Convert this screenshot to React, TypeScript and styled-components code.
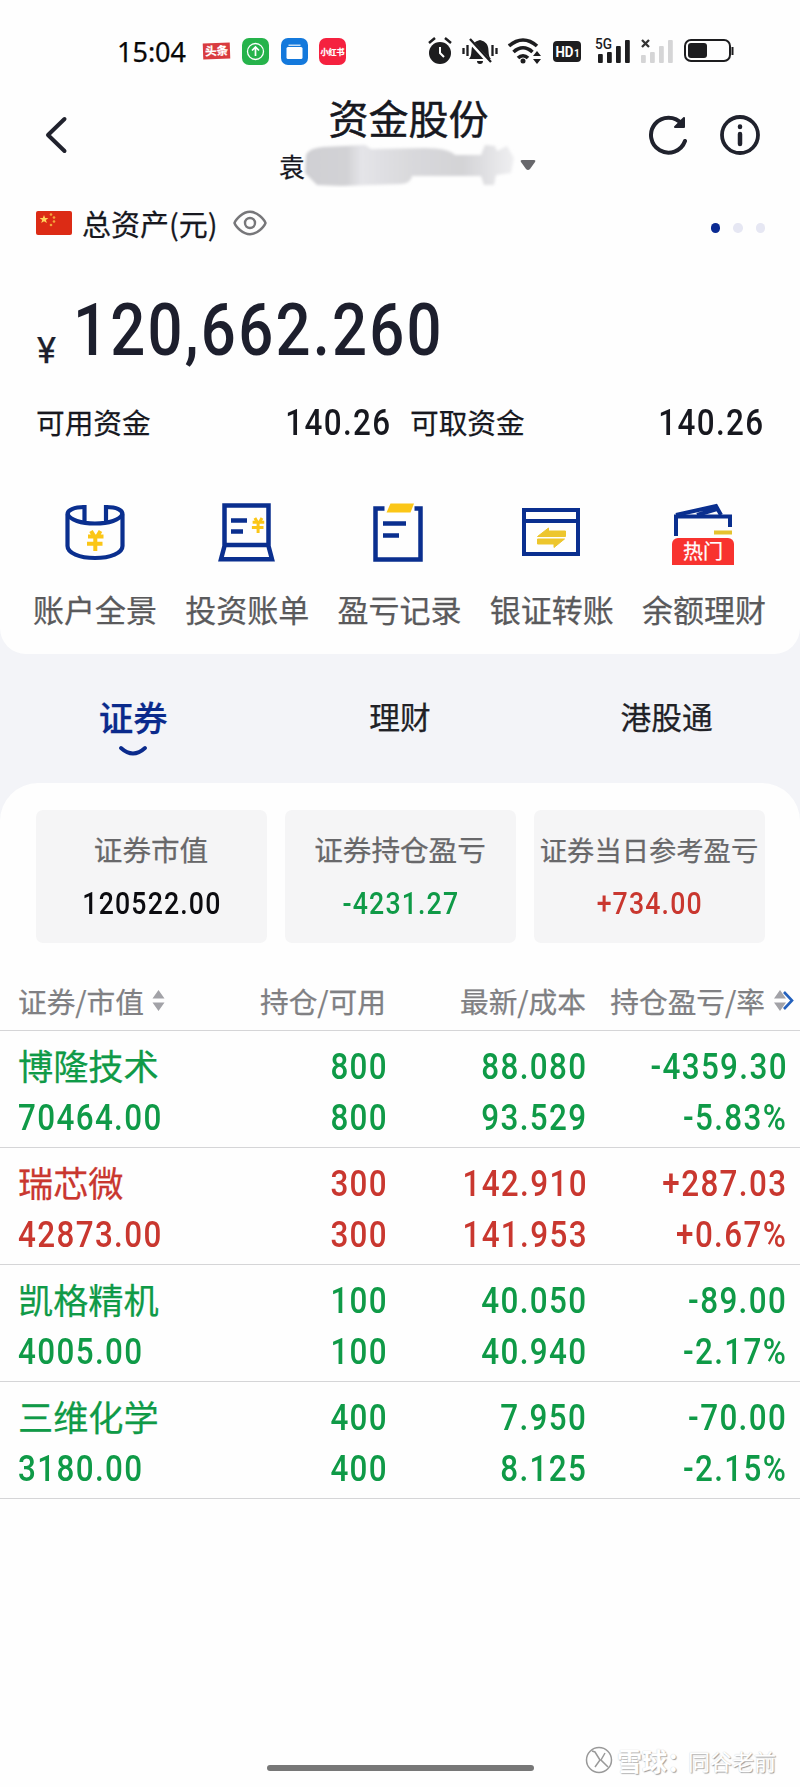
import React from "react";
import styled, { createGlobalStyle } from "styled-components";

const NAVY = "#0a2f8f";
const GOLD = "#fbc617";
const GREEN = "#0f9a47";
const RED = "#c9372f";
const CJK = `"Noto Sans CJK SC", sans-serif`;

const GlobalStyle = createGlobalStyle`
  * { box-sizing: border-box; }
  body { margin: 0; background: #fefefe; font-family: ${CJK}; color: #17181f; -webkit-text-stroke: 0.25px; }
`;

const Screen = styled.main`
  position: relative;
  width: 800px;
  height: 1787px;
  background: #f3f4f8;
  display: flex;
  flex-direction: column;
  overflow: hidden;
`;

const Hero = styled.section`
  height: 654px;
  background: #fefefe;
  border-radius: 0 0 26px 26px;
`;

/* Numerals are set in a condensed cut: narrowed glyphs with open tracking. */
const Num = styled.span<{ $size: number; $origin?: string; $weight?: number; $color?: string; $sx?: number; $track?: number }>`
  display: inline-block;
  font-family: Roboto, sans-serif;
  font-size: ${(p) => p.$size}px;
  font-weight: ${(p) => p.$weight ?? 500};
  color: ${(p) => p.$color ?? "inherit"};
  letter-spacing: ${(p) => p.$track ?? 0.044}em;
  margin-right: ${(p) => -(p.$track ?? 0.044)}em;
  padding-top: 2px;
  -webkit-text-stroke: 0;
  transform: scaleX(${(p) => p.$sx ?? 0.86});
  transform-origin: ${(p) => p.$origin ?? "right"} center;
  white-space: nowrap;
`;

const StatusBar = styled.div`
  display: flex;
  align-items: center;
  justify-content: space-between;
  height: 88px;
  padding: 14px 66px 0 117px;
`;
const StatusGroup = styled.div`
  display: flex;
  align-items: center;
`;
const Clock = styled.span`
  font: 400 27px "Noto Sans", sans-serif;
  color: #080808;
  width: 86px;
`;
const NewsChip = styled.span`
  width: 27px;
  height: 16px;
  margin-right: 12px;
  background: #d93b3f;
  color: #fff;
  font: 700 11.5px/15px ${CJK};
  text-align: center;
  transform: rotate(-2deg);
`;
const AppChip = styled.span<{ $bg: string }>`
  display: flex;
  align-items: center;
  justify-content: center;
  width: 27px;
  height: 27px;
  margin-right: 11.5px;
  border-radius: 7px;
  background: ${(p) => p.$bg};
  color: #fff;
  font: 700 8px/27px ${CJK};
  white-space: nowrap;
`;

const Header = styled.header`
  display: grid;
  grid-template-columns: 200px 1fr 200px;
  height: 108px;
`;
const HeaderSide = styled.div<{ $right?: boolean }>`
  display: flex;
  align-items: center;
  gap: 31px;
  height: 94px;
  padding: ${(p) => (p.$right ? "0 0 0 48px" : "0 0 0 43px")};
`;
const HeaderTitle = styled.h1`
  margin: 4px 0 0;
  font-size: 40px;
  font-weight: 400;
  line-height: 50px;
  text-align: center;
  padding-left: 17px;
  -webkit-text-stroke: 0.5px;
`;
const Account = styled.div`
  display: flex;
  align-items: center;
  margin-left: 79px;
  height: 46px;
  font-size: 26px;
`;
const Smudge = styled.svg`
  margin: 0 2px 0 -2px;
`;

const TotalRow = styled.div`
  display: flex;
  align-items: center;
  height: 52px;
  padding: 1px 35px 0 36px;
`;
const TotalLabel = styled.span`
  width: 150px;
  margin-left: 10px;
  font-size: 29px;
  line-height: 44px;
  white-space: nowrap;
`;
const Dots = styled.div`
  display: flex;
  gap: 13px;
  margin: 11px 0 0 auto;
`;
const Dot = styled.i<{ $on?: boolean }>`
  width: 9.5px;
  height: 9.5px;
  border-radius: 50%;
  background: ${(p) => (p.$on ? "#0a2a93" : "#e6e7f3")};
`;

const BigAmount = styled.div`
  display: flex;
  align-items: baseline;
  height: 140px;
  padding: 36px 0 0 37px;
  color: #1d1f2d;
  line-height: 88px;
`;
const Yen = styled.span`
  width: 36px;
  font: 400 36px/40px Roboto, sans-serif;
  position: relative;
  top: 8px;
`;

const Funds = styled.div`
  display: grid;
  grid-template-columns: 354px 353px;
  column-gap: 20px;
  height: 66px;
  padding-left: 36px;
`;
const Fund = styled.div`
  display: flex;
  justify-content: space-between;
  align-items: center;
  font-size: 28.7px;
`;

const Tools = styled.nav`
  display: grid;
  grid-template-columns: repeat(5, 1fr);
  padding: 49px 20px 0 19px;
`;
const Tool = styled.div`
  display: flex;
  flex-direction: column;
  align-items: center;
  font-size: 31px;
  line-height: 46px;
  color: #5a5a5c;
  white-space: nowrap;
`;
const ToolIcon = styled.div`
  position: relative;
  width: 64px;
  height: 64px;
  margin-bottom: 19px;
  svg { display: block; }
`;
const HotBadge = styled.span`
  position: absolute;
  left: 0;
  top: 35px;
  width: 62px;
  height: 27px;
  border-radius: 6px 6px 0 0;
  background: #f8332f;
  color: #fff;
  font-size: 20px;
  line-height: 25px;
  text-align: center;
`;

const Tabs = styled.div`
  display: grid;
  grid-template-columns: repeat(3, 1fr);
  height: 129px;
  padding-top: 37px;
`;
const Tab = styled.div<{ $active?: boolean }>`
  display: flex;
  flex-direction: column;
  align-items: center;
  font-size: ${(p) => (p.$active ? 34.5 : 30.7)}px;
  font-weight: ${(p) => (p.$active ? 500 : 400)};
  line-height: 50px;
  color: ${(p) => (p.$active ? "#0a2a8c" : "#202126")};
  svg { margin-top: 4px; }
`;

const Panel = styled.section`
  flex: 1;
  background: #fefefe;
  border-radius: 38px 38px 0 0;
  padding-top: 27px;
`;
const Cards = styled.div`
  display: grid;
  grid-template-columns: repeat(3, 231px);
  column-gap: 18px;
  padding-left: 35.5px;
`;
const Card = styled.div`
  display: flex;
  flex-direction: column;
  align-items: center;
  height: 133px;
  padding-top: 17px;
  border-radius: 7px;
  background: #f5f5f6;
`;
const CardLabel = styled.span<{ $small?: boolean }>`
  font-size: ${(p) => (p.$small ? 27.3 : 28.6)}px;
  line-height: 44px;
  color: #68686a;
  white-space: nowrap;
`;
const CardValue = styled.div`
  line-height: 62px;
`;

const Row = styled.div<{ $head?: boolean; $color?: string }>`
  display: grid;
  grid-template-columns: 220px 148px 200px 200px;
  height: ${(p) => (p.$head ? 88 : 117)}px;
  padding: ${(p) => (p.$head ? "35px" : "8px")} 0 0 18px;
  border-bottom: 1.5px solid #d5d5d7;
  color: ${(p) => p.$color ?? "#808083"};
  font-size: 28.7px;
  line-height: 46px;
`;
const Cell = styled.div<{ $left?: boolean }>`
  display: flex;
  flex-direction: column;
  align-items: ${(p) => (p.$left ? "flex-start" : "flex-end")};
  line-height: 51px;
  ${Num} { height: 51px; }
`;
const StockName = styled.span`
  font-size: 35.2px;
  height: 51px;
`;
const HeadCell = styled.div<{ $left?: boolean; $wide?: boolean }>`
  display: flex;
  align-items: center;
  justify-content: ${(p) => (p.$left ? "flex-start" : "flex-end")};
  gap: 8px;
  height: 46px;
  margin-right: ${(p) => (p.$wide ? -8 : 0)}px;
  white-space: nowrap;
`;

const HomeBar = styled.div`
  position: absolute;
  left: 267px;
  top: 1765px;
  width: 267px;
  height: 6px;
  border-radius: 3px;
  background: #777;
`;
const Watermark = styled.div`
  position: absolute;
  left: 585px;
  top: 1743px;
  display: flex;
  align-items: center;
  height: 34px;
  color: #fff;
  font-size: 22px;
  white-space: nowrap;
  text-shadow: 1px 1px 1px #999, 0 0 1px #bbb;
`;
const Brand = styled.b`
  width: 71px;
  margin-left: 4px;
  font-size: 25px;
  font-weight: 700;
`;

const GoldYen = ({ x, y, s = 1 }: { x: number; y: number; s?: number }) => (
  <path
    transform={`translate(${x} ${y}) scale(${s})`}
    d="M4.500 0l3 5M14 0l-3 5M1.500 5.500h15.500M.5 12.800h15.500M8.800 5v15"
    stroke={GOLD}
    strokeWidth="4"
    fill="none"
  />
);

const PanoramaIcon = () => (
  <svg width="64" height="64" viewBox="0 0 64 64" fill="none" stroke={NAVY} strokeWidth="4.2">
    <path d="M21.500 4C11 4 4.500 7 4.500 11.500V43c0 7 12 12 27.500 12S59.500 50 59.500 43V11.500C59.500 7 54 4 43 4" />
    <path d="M4.500 11C7 17 18 20.500 32 20.500S57 17 59.500 11M21.500 2v17M43 2v17" />
    <GoldYen x={23.5} y={28} />
  </svg>
);
const BillIcon = () => (
  <svg width="64" height="64" viewBox="0 0 64 64" fill="none" stroke={NAVY} strokeWidth="4.5">
    <path d="M9.500 42V2.500h44V42zM9.500 43L6 56.300h51L53.500 43" />
    <path d="M16 17.500h16M16 28.500h12" />
    <GoldYen x={36.5} y={15} s={0.75} />
  </svg>
);
const RecordIcon = () => (
  <svg width="64" height="64" viewBox="0 0 64 64" fill="none" stroke={NAVY} strokeWidth="4.5">
    <path d="M17.500 5.500H8.500v51h45V5.500h-6" />
    <path d="M16 20.500h23M16 32.500h16" />
    <path d="M23.500 0.500H47l-3.500 9H19.500z" fill={GOLD} stroke="none" />
  </svg>
);
const TransferIcon = () => (
  <svg width="64" height="64" viewBox="0 0 64 64" fill="none" stroke={NAVY} strokeWidth="4">
    <path d="M4 7h54v44H4zM4 18h54" />
    <path d="M17.500 33.500l11-8.500v3h17v5.500zM17.500 36h27L34 44.500v-3.500H17.500z" fill="#edc62d" stroke="#edc62d" strokeWidth="1" />
  </svg>
);
const WalletIcon = () => (
  <svg width="64" height="64" viewBox="0 0 64 64" fill="none" stroke={NAVY} strokeWidth="4">
    <path d="M4 33V13.500h54V24" />
    <path d="M4 12L44 3l5 9M25 12l20-6" />
    <path d="M42 29.500h18" stroke="#e5c22f" />
  </svg>
);
const SortIcon = () => (
  <svg width="13" height="24" viewBox="0 0 13 24" fill="#a2a2a7">
    <path d="M6.500 1L12.500 9.500H.5zM6.500 22L.5 13.500h12z" />
  </svg>
);
const Signal = ({ color, heights }: { color: string; heights: number[] }) => (
  <g fill={color}>
    {heights.map((h, i) => (
      <rect key={i} x={i * 9} y={27 - h} width="4.8" height={h} rx="1" />
    ))}
  </g>
);

const tools = [
  { label: "账户全景", icon: <PanoramaIcon /> },
  { label: "投资账单", icon: <BillIcon /> },
  { label: "盈亏记录", icon: <RecordIcon /> },
  { label: "银证转账", icon: <TransferIcon /> },
  { label: "余额理财", icon: <WalletIcon />, hot: true },
];
const cards = [
  { label: "证券市值", value: "120522.00", color: "#0c0c10" },
  { label: "证券持仓盈亏", value: "-4231.27", color: GREEN },
  { label: "证券当日参考盈亏", value: "+734.00", color: RED, small: true },
];
const holdings = [
  { name: "博隆技术", value: "70464.00", color: GREEN, cols: [["800", "800"], ["88.080", "93.529"], ["-4359.30", "-5.83%"]] },
  { name: "瑞芯微", value: "42873.00", color: RED, cols: [["300", "300"], ["142.910", "141.953"], ["+287.03", "+0.67%"]] },
  { name: "凯格精机", value: "4005.00", color: GREEN, cols: [["100", "100"], ["40.050", "40.940"], ["-89.00", "-2.17%"]] },
  { name: "三维化学", value: "3180.00", color: GREEN, cols: [["400", "400"], ["7.950", "8.125"], ["-70.00", "-2.15%"]] },
];

const StatusIconsSvg = styled.svg`
  overflow: visible;
  margin-top: 2px;
`;
const StatusIcons = () => (
  <StatusIconsSvg width="306" height="30" viewBox="0 0 306 30" fill="#1d1d1f">
    <circle cx="12" cy="16" r="11" />
    <path d="M1 6l6-5M23 6l-6-5" stroke="#1d1d1f" strokeWidth="2.5" />
    <path d="M12 10v6l4 4" stroke="#fff" strokeWidth="2" fill="none" />
    <path d="M41 22c3-3 2-8 3-12 1-4 4-6 8-7 4 1 7 3 8 7 1 4 0 9 3 12zM49 24h6a3 3 0 01-6 0z" />
    <path d="M41 3l22 24" stroke="#fff" strokeWidth="4.5" />
    <path d="M42 2l21 23M35.500 11v6M39.500 8v11M64.500 8v11M68.500 11v6" stroke="#1d1d1f" strokeWidth="2.3" />
    <g fill="none" stroke="#1d1d1f" strokeWidth="3.6">
      <path d="M81 9c9-8 19-8 28 0M85.500 15c6-5.500 13-5.500 19 0M90 21c3-3 7-3 10 0" />
    </g>
    <circle cx="95" cy="24" r="2.500" />
    <path d="M105 19l4-5 4 5zM105 22l4 5 4-5z" />
    <rect x="125" y="4" width="28" height="21" rx="4" />
    <text x="127.500" y="20" fill="#fff" fontFamily="Roboto" fontWeight="700" fontSize="15" textLength="18" lengthAdjust="spacingAndGlyphs">HD</text>
    <text x="146" y="20" fill="#fff" fontFamily="Roboto" fontWeight="700" fontSize="10">1</text>
    <text x="167" y="12" fontFamily="Roboto" fontWeight="500" fontSize="15" textLength="17" lengthAdjust="spacingAndGlyphs">5G</text>
    <g transform="translate(170 -1)"><Signal color="#1d1d1f" heights={[9, 11, 17, 23]} /></g>
    <path d="M214 3l7 7M221 3l-7 7" stroke="#333" strokeWidth="2.3" />
    <g transform="translate(213 -1)"><Signal color="#d5d5d6" heights={[8, 11, 17, 23]} /></g>
    <rect x="257" y="3" width="45" height="21" rx="6" fill="none" stroke="#1d1d1f" strokeWidth="2" />
    <rect x="260" y="6" width="19" height="15" rx="3" />
    <path d="M304.500 10v8" stroke="#1d1d1f" strokeWidth="2" />
  </StatusIconsSvg>
);

export default function App() {
  return (
    <Screen>
      <GlobalStyle />
      <Hero>
        <StatusBar>
          <StatusGroup>
            <Clock>15:04</Clock>
            <NewsChip>头条</NewsChip>
            <AppChip $bg="#26b34b">
              <svg width="19" height="19" viewBox="0 0 19 19" fill="none" stroke="#fff" strokeWidth="1.3">
                <circle cx="9.500" cy="9.500" r="8" />
                <path d="M9.500 14V5M6 8.500L9.500 5 13 8.500" strokeWidth="1.7" />
              </svg>
            </AppChip>
            <AppChip $bg="#1479dc">
              <svg width="19" height="19" viewBox="0 0 19 19" fill="#fff">
                <path d="M3.500 4V2.500h12V4z" opacity=".75" />
                <rect x="1.500" y="5" width="16" height="12" rx="1.500" />
              </svg>
            </AppChip>
            <AppChip $bg="#f5213f">小红书</AppChip>
          </StatusGroup>
          <StatusIcons />
        </StatusBar>
        <Header>
          <HeaderSide>
            <svg width="26" height="40" viewBox="0 0 26 40" fill="none" stroke="#20222d" strokeWidth="4" strokeLinecap="round" strokeLinejoin="round">
              <path d="M21.500 4L5 20l16.500 16" />
            </svg>
          </HeaderSide>
          <div>
            <HeaderTitle>资金股份</HeaderTitle>
            <Account>
              袁
              <Smudge width="214" height="46" viewBox="0 0 214 46">
                <defs>
                  <filter id="soft" x="-5%" y="-20%" width="110%" height="140%"><feGaussianBlur stdDeviation="1.8" /></filter>
                  <linearGradient id="smear">
                    <stop offset="0" stopColor="#cfcfd3" />
                    <stop offset=".2" stopColor="#d2d2d5" />
                    <stop offset=".27" stopColor="#e4e4e8" />
                    <stop offset=".5" stopColor="#d9d9dc" />
                    <stop offset=".75" stopColor="#d3d3d6" />
                    <stop offset="1" stopColor="#efeff1" />
                  </linearGradient>
                </defs>
                <path
                  filter="url(#soft)"
                  fill="url(#smear)"
                  d="M3 13Q6 6 20 5L62 3 68 7 122 6Q145 6 152 13L178 13 182 3 192 4 194 9 204 4 211 16 208 31 193 33 191 43H181L178 34H109Q108 41 98 42L38 44 14 43 2 31z"
                />
              </Smudge>
              <svg width="18" height="12" viewBox="0 0 18 12" fill="#67676b">
                <path d="M3 1h12q2 0 1 2L11 10q-2 2-4 0L2 3Q1 1 3 1z" />
              </svg>
            </Account>
          </div>
          <HeaderSide $right>
            <svg width="40" height="42" viewBox="0 0 40 42" fill="none" stroke="#20222d" strokeWidth="4" strokeLinecap="round" strokeLinejoin="round">
              <path d="M37 27A17.500 17.500 0 1134 10" />
              <path d="M36 4v9h-9z" fill="#20222d" strokeWidth="2" />
            </svg>
            <svg width="42" height="42" viewBox="0 0 42 42" fill="none" stroke="#20222d" strokeWidth="3.8" strokeLinecap="round">
              <circle cx="21" cy="21" r="18" />
              <path d="M21 20v10M21 12.500v.6" strokeWidth="4.5" />
            </svg>
          </HeaderSide>
        </Header>
        <TotalRow>
          <svg width="36" height="24" viewBox="0 0 36 24">
            <rect width="36" height="24" rx="2" fill="#dc2b15" />
            <path d="M8 4l1.200 3h3.200l-2.500 2 1 3L8 10.200 5.200 12l1-3-2.600-2h3.200z" fill="#ffd45b" />
            <g fill="#f4a53c"><circle cx="15" cy="3.500" r="1.300" /><circle cx="18" cy="6.500" r="1.300" /><circle cx="18" cy="10.500" r="1.300" /><circle cx="15" cy="14" r="1.300" /></g>
          </svg>
          <TotalLabel>总资产(元)</TotalLabel>
          <svg width="36" height="26" viewBox="0 0 36 26" fill="none" stroke="#77777a" strokeWidth="2.4">
            <path d="M2.500 13Q3.500 10 8 6 13 1.800 18 1.800T28 6Q32.500 10 33.500 13 32.500 16 28 20 23 24.200 18 24.200T8 20Q3.500 16 2.500 13z" />
            <circle cx="18" cy="13" r="5" />
          </svg>
          <Dots><Dot $on /><Dot /><Dot /></Dots>
        </TotalRow>
        <BigAmount>
          <Yen>¥</Yen>
          <Num $size={73} $origin="left" $sx={0.845} $track={0.036}>120,662.260</Num>
        </BigAmount>
        <Funds>
          <Fund>可用资金<Num $size={36.5}>140.26</Num></Fund>
          <Fund>可取资金<Num $size={36.5}>140.26</Num></Fund>
        </Funds>
        <Tools>
          {tools.map((t) => (
            <Tool key={t.label}>
              <ToolIcon>{t.icon}{t.hot && <HotBadge>热门</HotBadge>}</ToolIcon>
              {t.label}
            </Tool>
          ))}
        </Tools>
      </Hero>
      <Tabs>
        <Tab $active>
          证券
          <svg width="30" height="12" viewBox="0 0 30 12" fill="none" stroke="#0a2a8c" strokeWidth="3.8" strokeLinecap="round">
            <path d="M3 3q12 11 24 0" />
          </svg>
        </Tab>
        <Tab>理财</Tab>
        <Tab>港股通</Tab>
      </Tabs>
      <Panel>
        <Cards>
          {cards.map((c) => (
            <Card key={c.label}>
              <CardLabel $small={c.small}>{c.label}</CardLabel>
              <CardValue><Num $size={31} $origin="center" $color={c.color}>{c.value}</Num></CardValue>
            </Card>
          ))}
        </Cards>
        <Row $head>
          <HeadCell $left>证券/市值<SortIcon /></HeadCell>
          <HeadCell>持仓/可用</HeadCell>
          <HeadCell>最新/成本</HeadCell>
          <HeadCell $wide>
            持仓盈亏/率
            <svg width="21" height="24" viewBox="0 0 21 24">
              <path d="M7 1L13 9.500H1zM7 22L1 13.500h12z" fill="#a2a2a7" />
              <path d="M11 3l8 8.500-8 8.500" fill="none" stroke="#2461bd" strokeWidth="2.6" />
            </svg>
          </HeadCell>
        </Row>
        {holdings.map((h) => (
          <Row key={h.name} $color={h.color}>
            <Cell $left>
              <StockName>{h.name}</StockName>
              <Num $size={36.5} $origin="left">{h.value}</Num>
            </Cell>
            {h.cols.map(([a, b], i) => (
              <Cell key={i}>
                <Num $size={36.5}>{a}</Num>
                <Num $size={36.5}>{b}</Num>
              </Cell>
            ))}
          </Row>
        ))}
      </Panel>
      <HomeBar />
      <Watermark>
        <svg width="28" height="28" viewBox="0 0 28 28" fill="none" stroke="#999" strokeWidth="1.5">
          <circle cx="14" cy="14" r="12.500" />
          <path d="M7 5l3 1 5 8-5 7M20 7l-4 7 7 7" />
        </svg>
        <Brand>雪球：</Brand>
        同谷老前
      </Watermark>
    </Screen>
  );
}
